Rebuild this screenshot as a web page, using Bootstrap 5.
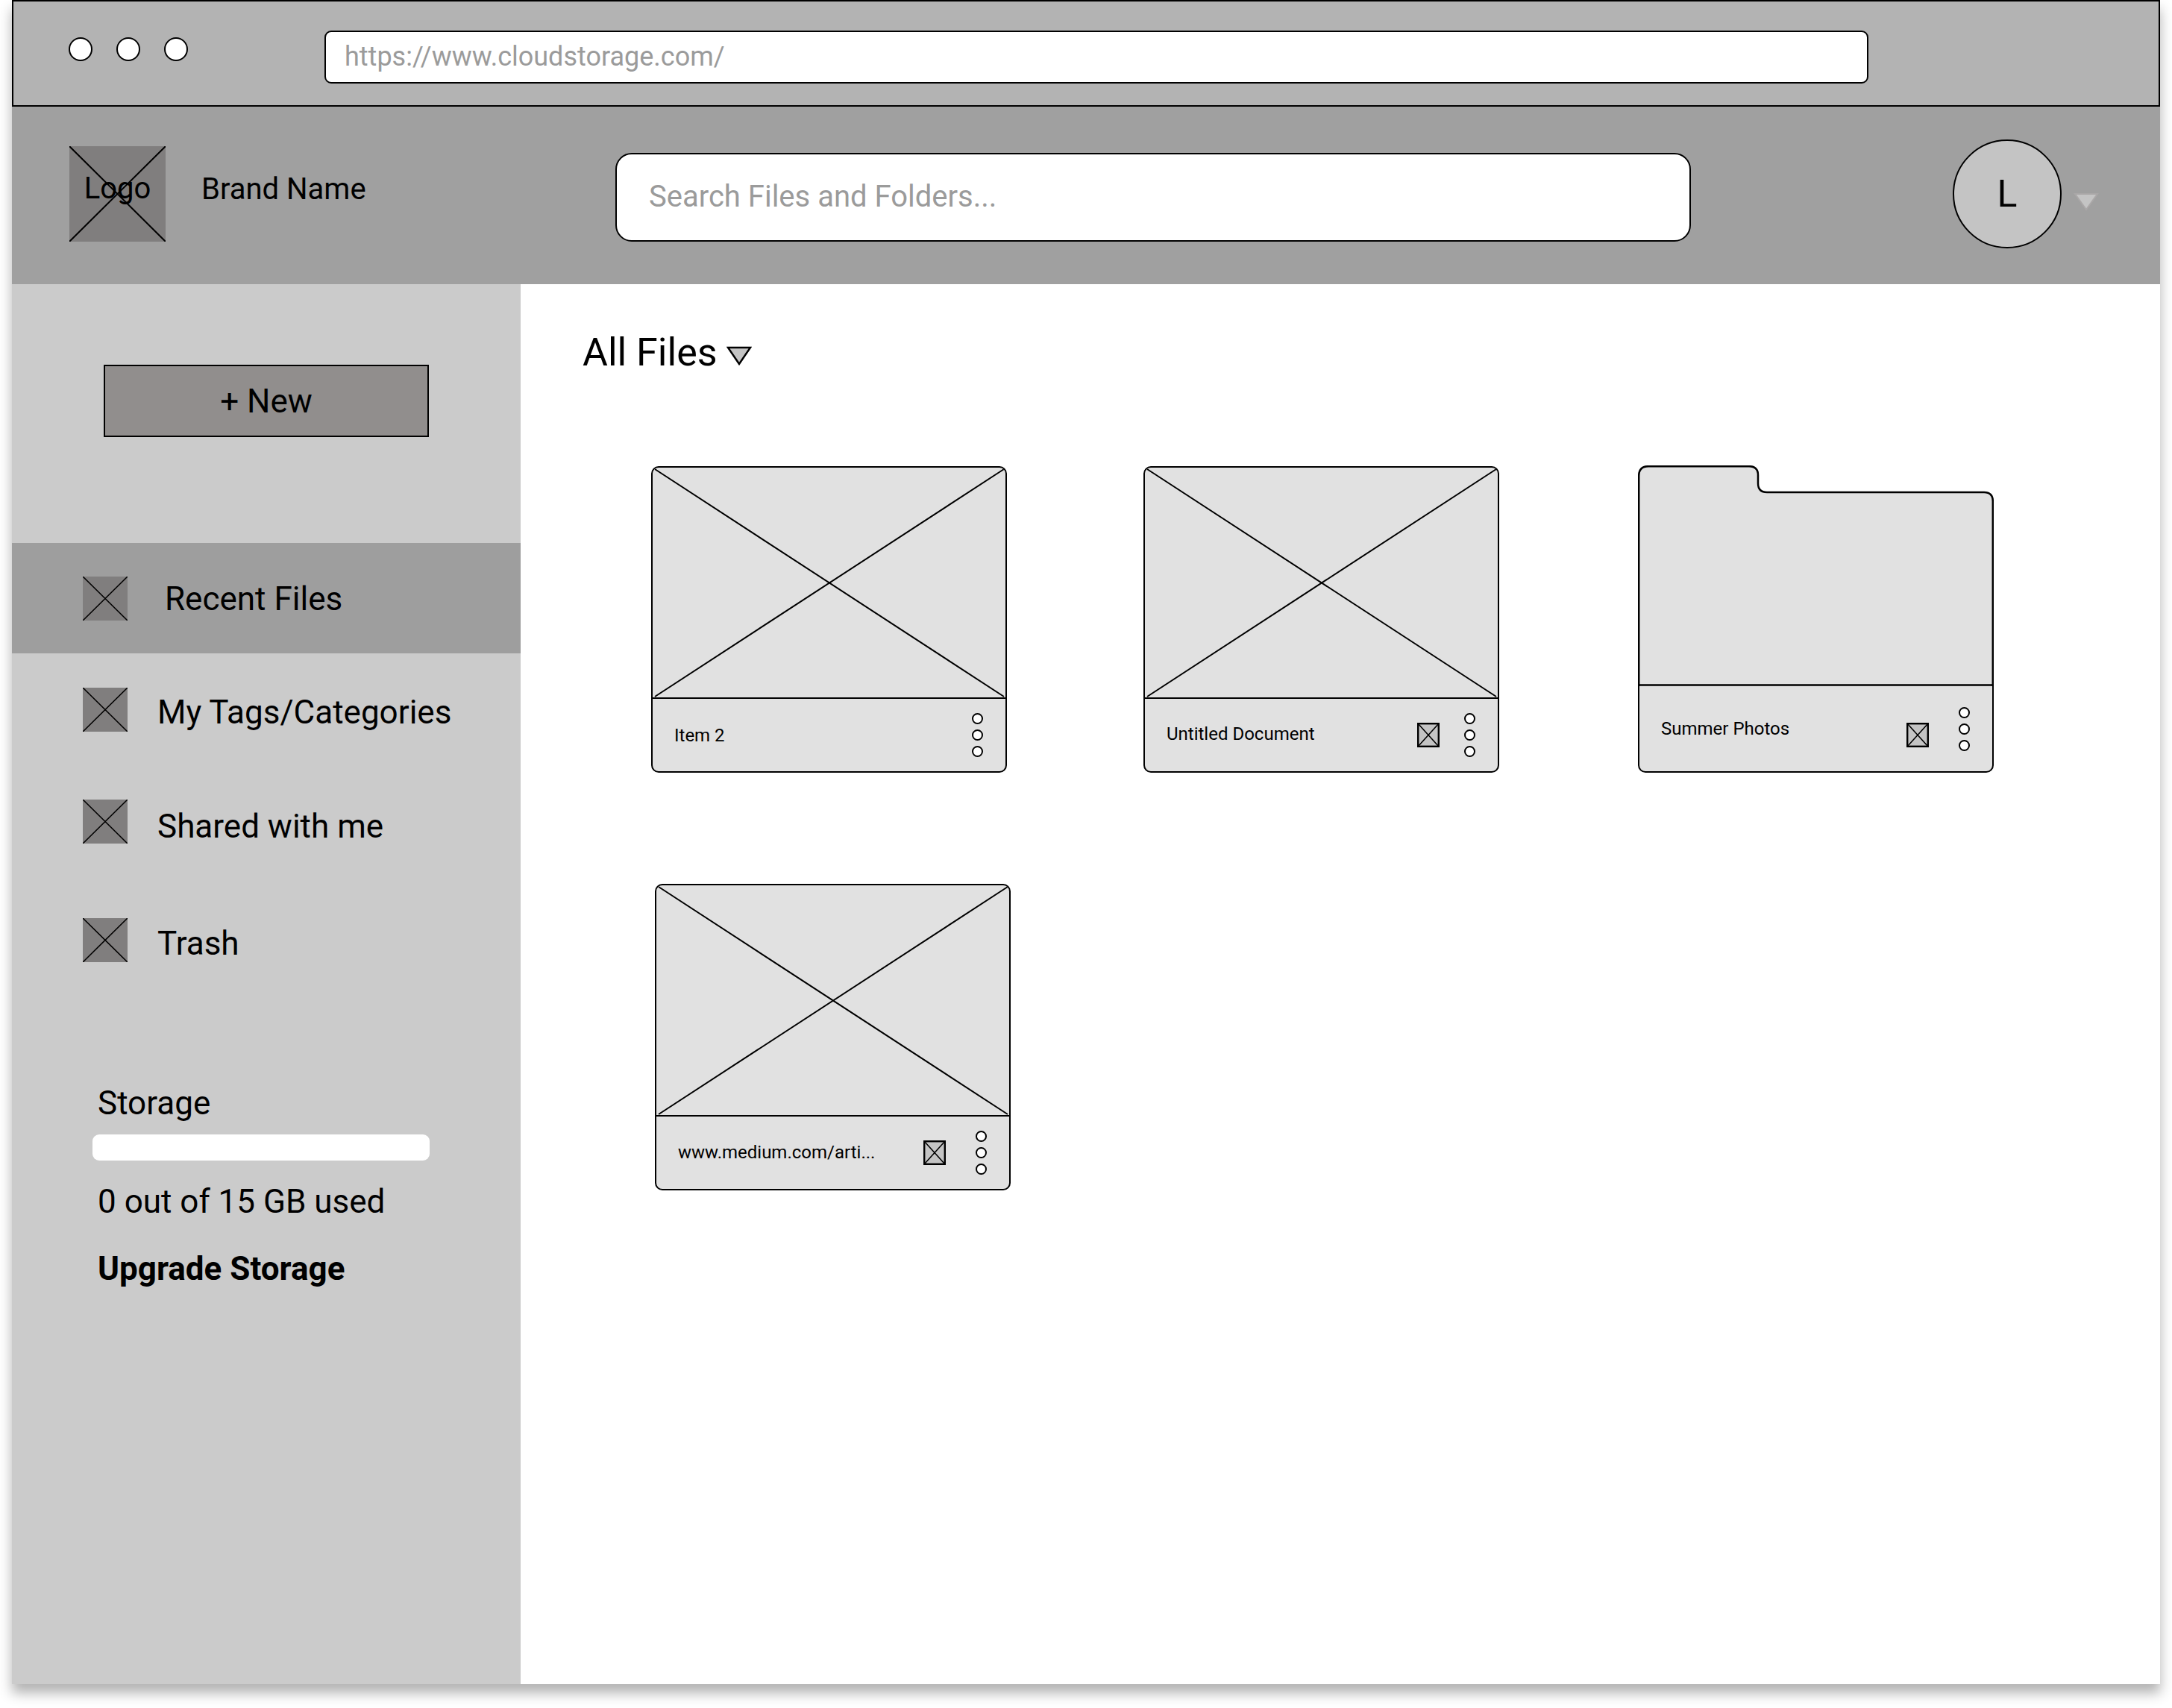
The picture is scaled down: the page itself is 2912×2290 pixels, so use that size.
<!doctype html>
<html lang="en">
<head>
<meta charset="utf-8">
<title>Cloud Storage Wireframe</title>
<link rel="stylesheet" href="https://cdn.jsdelivr.net/npm/bootstrap@5.3.0/dist/css/bootstrap.min.css">
<style>
html,body{background:#fff;margin:0}
body{font-family:Roboto,"Liberation Sans",sans-serif;color:#000;width:2912px;height:2290px;overflow:hidden}
.shell{margin-left:16px;width:2880px;height:2258px;box-shadow:0 12px 16px rgba(0,0,0,.3)}
.chrome-bar{height:143px;background:#b3b3b3;border:2.5px solid #000;padding-left:74px}
.light{width:32px;height:32px;background:#fff;border:2.5px solid #000;border-radius:50%;flex:none}
.lights{gap:32px;margin-top:-12px}
.url-box{width:2070px;height:71px;margin-left:183px;margin-top:9px;background:#fff;border:2.5px solid #000;border-radius:9px;padding:0 25px;font-size:36px;color:#9b9b9b;line-height:66px}
.top-bar{height:238px;background:#a0a0a0;padding-left:77px}
.logo-box{width:129px;height:128px;background:#807e7e;font-size:40px;line-height:1;padding-bottom:14px;margin-top:-4px}
.fill-x{position:absolute;inset:0;width:100%;height:100%}
.brand-name{font-size:40px;margin-left:48px;margin-top:-16px;width:555px;flex:none}
.search-box{width:1442px;height:119px;margin-top:4px;background:#fff;border:2px solid #000;border-radius:22px;padding:0 43px;font-size:40px;line-height:113px;color:#9b9b9b;flex:none}
.avatar-disc{width:146px;height:146px;margin-left:351px;margin-top:-4px;background:#c4c4c4;border:2.5px solid #000;font-size:50px;flex:none}
.caret-mark{width:34px;height:25px;margin-left:16px;margin-top:17px;flex:none}
.body-wrap{height:1877px}
.side-col{width:682px;flex:none;background:#cbcbcb}
.new-btn{display:block;width:436px;height:97px;margin:108px 0 142px 123px;background:#918e8d;border:2.5px solid #000;border-radius:0;font-size:44px;line-height:1;color:#000;padding:0}
.new-btn:hover{background:#918e8d;color:#000;border-color:#000}
.side-link{height:150px;padding:0 0 0 95px;font-size:44px;color:#000;gap:40px}
.side-link:hover{color:#000}
.side-link.on{height:148px;background:#9e9e9e;gap:50px}
.side-link.drop{margin-top:9px}
.side-link span{margin-top:8px}
.side-link.on span{margin-top:2px}
.side-link.mid span{margin-top:13px}
.side-link.drop span{margin-top:10px}
.x-tile{width:60px;height:59px;background:#807e7e;flex:none;display:block}
.store-block{padding-left:115px;margin-top:117px;font-size:44px;line-height:55px}
.store-bar{width:452px;height:35px;margin:14px 0 28px -7px;background:#fff;border-radius:9px}
.store-up{margin-top:35px;font-weight:700}
.main-col{padding:0 0 0 83px;min-width:0}
.files-title{font-size:52px;line-height:64px;margin:60px 0 0 0;gap:12px;font-weight:400}
.files-tri{width:34px;height:26px;margin-top:8px}
.tile-grid{display:grid;grid-template-columns:477px 477px 477px;column-gap:183px;row-gap:149px;margin:120px 0 0 92px}
.tile{width:477px;height:411px;background:#e1e1e1;border:2.5px solid #000;border-radius:10px;overflow:hidden;color:#000}
.shift-a{margin-left:3px;margin-top:-1px;height:412px;background:transparent;border:0;border-radius:0;overflow:visible}
.shift-b{margin-left:5px}
.tile-thumb{height:310px;display:block;border-bottom:2.5px solid #000;width:100%}
.tile-foot{padding:0 30px 0 29px;font-size:24px;min-height:0;flex:1}
.tile-name{flex:1;white-space:nowrap}
.name-up{margin-top:-4px}
.name-up-sm{margin-top:-2px}
.tick-box{width:30px;height:33px;background:#c4c4c4;flex:none;display:block;margin-right:40px}
.tick-near{margin-right:33px}
.dot-stack{gap:7px;flex:none}
.dot{width:15px;height:15px;border:2.5px solid #000;border-radius:50%;background:#fff}
.folder-top{display:block;width:477px;height:296px;flex:none}
.folder-foot{height:116px;background:#e1e1e1;border:2.5px solid #000;border-top:0;border-radius:0 0 10px 10px;flex:none;padding:0 30px 0 29px;font-size:24px}
.tick-low{margin-top:16px}
</style>
</head>
<body>
<div class="shell d-flex flex-column">
  <div class="chrome-bar d-flex align-items-center">
    <div class="lights d-flex"><div class="light"></div><div class="light"></div><div class="light"></div></div>
    <div class="url-box">https://www.cloudstorage.com/</div>
  </div>
  <header class="top-bar d-flex align-items-center">
    <div class="logo-box position-relative d-flex align-items-center justify-content-center flex-none">
      <svg class="fill-x" viewBox="0 0 129 128" preserveAspectRatio="none"><path d="M0 0L129 128M129 0L0 128" stroke="#000" stroke-width="2" fill="none"/></svg>
      <span class="position-relative">Logo</span>
    </div>
    <div class="brand-name">Brand Name</div>
    <div class="search-box" role="searchbox">Search Files and Folders...</div>
    <div class="avatar-disc rounded-circle d-flex align-items-center justify-content-center">L</div>
    <svg class="caret-mark" viewBox="0 0 34 25"><path d="M2 2H32L17 23Z" fill="#c4c4c4" stroke="#aaa7a7" stroke-width="2"/></svg>
  </header>
  <div class="body-wrap d-flex">
    <aside class="side-col">
      <button type="button" class="btn new-btn">+ New</button>
      <nav class="nav flex-column">
        <a class="nav-link side-link on d-flex align-items-center" href="#"><svg class="x-tile" viewBox="0 0 60 59"><path d="M0 0L60 59M60 0L0 59" stroke="#000" stroke-width="1.6"/></svg><span>Recent Files</span></a>
        <a class="nav-link side-link d-flex align-items-center" href="#"><svg class="x-tile" viewBox="0 0 60 59"><path d="M0 0L60 59M60 0L0 59" stroke="#000" stroke-width="1.6"/></svg><span>My Tags/Categories</span></a>
        <a class="nav-link side-link mid d-flex align-items-center" href="#"><svg class="x-tile" viewBox="0 0 60 59"><path d="M0 0L60 59M60 0L0 59" stroke="#000" stroke-width="1.6"/></svg><span>Shared with me</span></a>
        <a class="nav-link side-link drop d-flex align-items-center" href="#"><svg class="x-tile" viewBox="0 0 60 59"><path d="M0 0L60 59M60 0L0 59" stroke="#000" stroke-width="1.6"/></svg><span>Trash</span></a>
      </nav>
      <div class="store-block">
        <div>Storage</div>
        <div class="progress store-bar"></div>
        <div>0 out of 15 GB used</div>
        <div class="store-up">Upgrade Storage</div>
      </div>
    </aside>
    <main class="main-col flex-grow-1 bg-white">
      <h1 class="files-title d-flex align-items-center">All Files<svg class="files-tri" viewBox="0 0 34 26"><path d="M2 2H32L17 24Z" fill="#c4c4c4" stroke="#000" stroke-width="2.5"/></svg></h1>
      <div class="tile-grid">
        <div class="card tile">
          <svg class="tile-thumb" viewBox="0 0 472 307" preserveAspectRatio="none"><path d="M3 2L470 306M470 2L3 306" stroke="#000" stroke-width="2" fill="none"/></svg>
          <div class="tile-foot d-flex align-items-center"><span class="tile-name">Item 2</span><div class="dot-stack d-flex flex-column"><div class="dot"></div><div class="dot"></div><div class="dot"></div></div></div>
        </div>
        <div class="card tile">
          <svg class="tile-thumb" viewBox="0 0 472 307" preserveAspectRatio="none"><path d="M3 2L470 306M470 2L3 306" stroke="#000" stroke-width="2" fill="none"/></svg>
          <div class="tile-foot d-flex align-items-center"><span class="tile-name name-up">Untitled Document</span><svg class="tick-box tick-near" viewBox="0 0 30 33"><rect x="1.2" y="1.2" width="27.6" height="30.6" fill="#c4c4c4" stroke="#000" stroke-width="2.4"/><path d="M1 1L29 32M29 1L1 32" stroke="#000" stroke-width="1.6"/></svg><div class="dot-stack d-flex flex-column"><div class="dot"></div><div class="dot"></div><div class="dot"></div></div></div>
        </div>
        <div class="tile shift-a d-flex flex-column">
          <svg class="folder-top" viewBox="0 0 477 296"><path d="M1.2 296V14Q1.2 1.2 14 1.2H149Q161 1.2 161 13V24Q161 36 173 36H464Q475.8 36 475.8 48V296" fill="#e1e1e1" stroke="#000" stroke-width="2.5"/><path d="M0 294.5H477" stroke="#000" stroke-width="2.5"/></svg>
          <div class="folder-foot d-flex align-items-center"><span class="tile-name">Summer Photos</span><svg class="tick-box tick-low" viewBox="0 0 30 33"><rect x="1.2" y="1.2" width="27.6" height="30.6" fill="#c4c4c4" stroke="#000" stroke-width="2.4"/><path d="M1 1L29 32M29 1L1 32" stroke="#000" stroke-width="1.6"/></svg><div class="dot-stack d-flex flex-column"><div class="dot"></div><div class="dot"></div><div class="dot"></div></div></div>
        </div>
        <div class="card tile shift-b">
          <svg class="tile-thumb" viewBox="0 0 472 307" preserveAspectRatio="none"><path d="M3 2L470 306M470 2L3 306" stroke="#000" stroke-width="2" fill="none"/></svg>
          <div class="tile-foot d-flex align-items-center"><span class="tile-name name-up-sm">www.medium.com/arti...</span><svg class="tick-box" viewBox="0 0 30 33"><rect x="1.2" y="1.2" width="27.6" height="30.6" fill="#c4c4c4" stroke="#000" stroke-width="2.4"/><path d="M1 1L29 32M29 1L1 32" stroke="#000" stroke-width="1.6"/></svg><div class="dot-stack d-flex flex-column"><div class="dot"></div><div class="dot"></div><div class="dot"></div></div></div>
        </div>
      </div>
    </main>
  </div>
</div>
<script src="https://cdn.jsdelivr.net/npm/bootstrap@5.3.0/dist/js/bootstrap.bundle.min.js"></script>
</body>
</html>
